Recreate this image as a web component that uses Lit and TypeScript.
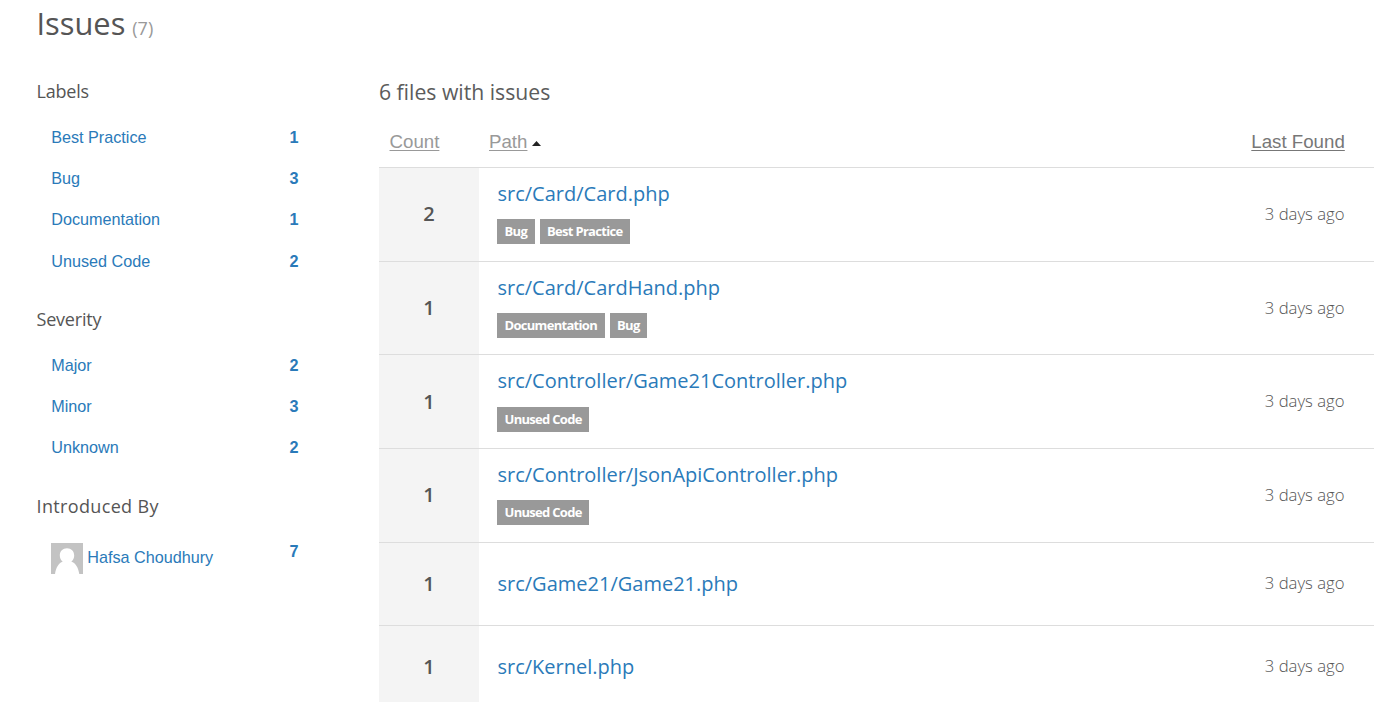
import { LitElement, html, css } from "lit";
import { customElement } from "lit/decorators.js";

interface Facet { name: string; count: number; avatar?: boolean }
interface FileRow { count: number; path: string; tags: string[] }

const groups: { title: string; wide?: boolean; items: Facet[] }[] = [
  { title: "Labels", items: [
    { name: "Best Practice", count: 1 },
    { name: "Bug", count: 3 },
    { name: "Documentation", count: 1 },
    { name: "Unused Code", count: 2 },
  ] },
  { title: "Severity", items: [
    { name: "Major", count: 2 },
    { name: "Minor", count: 3 },
    { name: "Unknown", count: 2 },
  ] },
  { title: "Introduced By", wide: true, items: [
    { name: "Hafsa Choudhury", count: 7, avatar: true },
  ] },
];

const files: FileRow[] = [
  { count: 2, path: "src/Card/Card.php", tags: ["Bug", "Best Practice"] },
  { count: 1, path: "src/Card/CardHand.php", tags: ["Documentation", "Bug"] },
  { count: 1, path: "src/Controller/Game21Controller.php", tags: ["Unused Code"] },
  { count: 1, path: "src/Controller/JsonApiController.php", tags: ["Unused Code"] },
  { count: 1, path: "src/Game21/Game21.php", tags: [] },
  { count: 1, path: "src/Kernel.php", tags: [] },
];

@customElement("facet-list")
class FacetList extends LitElement {
  static styles = css`
    :host { display: block; width: 262px; font: 16.2px/20px "Liberation Sans", Arial, sans-serif; color: #2a7ab9; }
    .title { margin: 0 0 12.7px; font: 400 18px/26px "Open Sans", sans-serif; letter-spacing: -0.2px; color: #555; }
    .wide { letter-spacing: 0.35px; }
    .group { margin-bottom: 24.3px; }
    .item { display: flex; justify-content: space-between; box-sizing: border-box; height: 41.25px; padding: 10.2px 0 0 14.7px; }
    .person { padding-top: 12px; }
    .name { display: flex; align-items: center; gap: 4px; height: 20px; }
    .person .name { height: 31px; }
    .person .name span { padding-bottom: 3px; }
    .avatar { display: block; width: 32px; height: 31px; }
    .count { font-weight: 700; }
    .person .count { margin-top: -2px; }
  `;
  render() {
    return groups.map((g) => html`
      <div class="group">
        <h4 class="title ${g.wide ? "wide" : ""}">${g.title}</h4>
        ${g.items.map((i) => html`
          <div class="item ${i.avatar ? "person" : ""}">
            <span class="name">
              ${i.avatar ? html`<svg class="avatar" viewBox="0 0 32 31">
                <rect width="32" height="31" fill="#c3c3c3"></rect>
                <path fill="#fff" d="M16 5.200c4.200 0 7.200 3 7.200 7.200 0 2.600-1.100 4.700-2.900 6.200 4 1.500 6.900 5.400 8 12.400H4c1.100-7 4-10.900 7.700-12.400-1.800-1.500-2.900-3.600-2.900-6.200 0-4.200 3-7.200 7.200-7.200z"></path>
              </svg>` : null}
              <span>${i.name}</span>
            </span>
            <span class="count">${i.count}</span>
          </div>`)}
      </div>`);
  }
}

@customElement("file-table")
class FileTable extends LitElement {
  static styles = css`
    :host { display: block; font-family: "Open Sans", sans-serif; }
    .row { display: grid; grid-template-columns: 100px 1fr 130px; box-sizing: border-box; height: 93.7px; border-top: 1px solid #ddd; }
    .plain { height: 83.1px; }
    .head { height: 51px; border: 0; font: 18.7px/24px "Liberation Sans", Arial, sans-serif; color: #999; padding-top: 14px; }
    .link { text-decoration: underline; text-decoration-thickness: 1px; text-underline-offset: 2px; }
    .head .count-head { padding-left: 10.5px; }
    .head .path-head { display: flex; align-items: center; gap: 5px; height: 24px; padding-left: 10px; }
    .head .last { text-align: right; padding-right: 29.2px; color: #777; }
    .arrow { width: 9px; height: 5px; margin-top: 3px; }
    .count { display: flex; align-items: center; justify-content: center; background: #f4f4f4; font-size: 20px; line-height: 28px; font-weight: 600; color: #555; }
    .file { display: flex; flex-direction: column; justify-content: center; gap: 11.3px; padding: 0 0 4.5px 18.5px; }
    .plain .file { padding-bottom: 0; }
    .path { font-size: 20px; line-height: 28px; color: #2a7ab9; }
    .tags { display: flex; gap: 5px; margin-left: -0.5px; }
    .tag { background: #999; color: #fff; font-size: 13px; line-height: 25px; font-weight: 700; letter-spacing: -0.7px; padding: 0 7.5px; }
    .ago { display: flex; align-items: center; justify-content: flex-end; padding: 0 29.5px 2px 0; font-size: 16.7px; font-weight: 300; color: #555; }
  `;
  render() {
    return html`
      <div class="row head">
        <div class="count-head"><span class="link">Count</span></div>
        <div class="path-head"><span class="link">Path</span>
          <svg class="arrow" viewBox="0 0 9 5"><path fill="#222" d="M0 5L4.500 0L9 5z"></path></svg></div>
        <div class="last"><span class="link">Last Found</span></div>
      </div>
      ${files.map((f) => html`
        <div class="row ${f.tags.length ? "" : "plain"}">
          <div class="count">${f.count}</div>
          <div class="file">
            <span class="path">${f.path}</span>
            ${f.tags.length ? html`<div class="tags">${f.tags.map((t) => html`<span class="tag">${t}</span>`)}</div>` : null}
          </div>
          <div class="ago">3 days ago</div>
        </div>`)}`;
  }
}

@customElement("app-root")
class AppRoot extends LitElement {
  static styles = css`
    :host { display: block; box-sizing: border-box; height: 702px; overflow: hidden; background: #fff; font-family: "Open Sans", sans-serif; color: #555; padding-left: 36.5px; }
    .heading { margin: 0; height: 78px; font-size: 30.8px; line-height: 47px; font-weight: 400; }
    .total { font-size: 18px; color: #999; margin-left: -1px; }
    .columns { display: grid; grid-template-columns: 342.5px 995px; }
    .subtitle { margin: 0; height: 38px; font-size: 21.2px; line-height: 28px; font-weight: 400; color: #5c5c5c; }
  `;
  render() {
    return html`
      <h1 class="heading">Issues <span class="total">(7)</span></h1>
      <div class="columns">
        <facet-list></facet-list>
        <main>
          <h2 class="subtitle">6 files with issues</h2>
          <file-table></file-table>
        </main>
      </div>`;
  }
}
